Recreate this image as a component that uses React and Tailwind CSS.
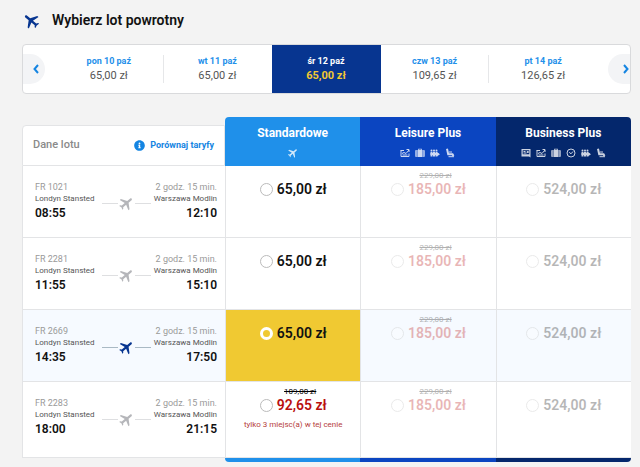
import { useState } from 'react';
import { FaInfoCircle } from 'react-icons/fa';
import { MdFlight } from 'react-icons/md';

const days = [
  { id: 'd10', label: 'pon 10 paź', price: '65,00 zł' },
  { id: 'd11', label: 'wt 11 paź', price: '65,00 zł' },
  { id: 'd12', label: 'śr 12 paź', price: '65,00 zł' },
  { id: 'd13', label: 'czw 13 paź', price: '109,65 zł' },
  { id: 'd14', label: 'pt 14 paź', price: '126,65 zł' },
];

const leisure = { id: 'leisure', price: '185,00 zł', oldPrice: '229,00 zł', disabled: true };
const business = { id: 'business', price: '524,00 zł', disabled: true };

const flights = [
  { number: 'FR 1021', departs: '08:55', arrives: '12:10', fares: [{ id: 'standard', price: '65,00 zł' }, leisure, business] },
  { number: 'FR 2281', departs: '11:55', arrives: '15:10', fares: [{ id: 'standard', price: '65,00 zł' }, leisure, business] },
  { number: 'FR 2669', departs: '14:35', arrives: '17:50', fares: [{ id: 'standard', price: '65,00 zł' }, leisure, business] },
  {
    number: 'FR 2283',
    departs: '18:00',
    arrives: '21:15',
    fares: [
      { id: 'standard', price: '92,65 zł', oldPrice: '109,00 zł', note: 'tylko 3 miejsc(a) w tej cenie' },
      leisure,
      business,
    ],
  },
];

const Chevron = ({ className }) => (
  <svg viewBox="0 0 6 10" className={`h-[10px] w-[6px] ${className}`} fill="none" stroke="currentColor" strokeWidth="2" aria-hidden="true">
    <path d="M5 1L1.5 5 5 9" />
  </svg>
);

const SeatMapIcon = () => (
  <svg viewBox="0 0 10 10" className="size-[10px]" fill="none" stroke="currentColor" aria-hidden="true">
    <path d="M.5 2.500h3.500M6.500 1.500h2.500v2.500M1 2.500v6h8V5.500M2 5.500l2-1 2 1L9 2M2.500 7h5" />
  </svg>
);

const BagIcon = () => (
  <svg viewBox="0 0 10 10" className="size-[10px]" fill="currentColor" aria-hidden="true">
    <path d="M3.200 2V.8h3.600V2H6V1.500H4V2zM.3 2.800q0-.8.8-.8h.6v7H1.100q-.8 0-.8-.8zM2.400 2h5.200v7H2.400zM8.300 2h.6q.8 0 .8.800v5.400q0 .8-.8.800h-.6z" />
  </svg>
);

const QueueIcon = () => (
  <svg viewBox="0 0 10 10" className="size-[10px]" fill="currentColor" aria-hidden="true">
    <circle cx="1.500" cy="2.500" r="1" />
    <circle cx="4" cy="2.500" r="1" />
    <circle cx="6.500" cy="2.500" r="1" />
    <path d="M.5 3.800h2v4.700h-2zM3 3.800h2v4.700H3zM5.500 3.800h2V4.500L10 6.300 7.500 8v.5h-2z" />
    <path d="M.5 5h8v2h-8z" />
  </svg>
);

const SeatIcon = () => (
  <svg viewBox="0 0 10 10" className="size-[10px]" fill="none" stroke="currentColor" aria-hidden="true">
    <path strokeWidth="2" d="M2 .8l1.200 5.400h4.300L8.500 8" />
    <path d="M4 4h3M3.500 8.700h5.500" />
  </svg>
);

const CertificateIcon = () => (
  <svg viewBox="0 0 10 10" className="size-[10px]" aria-hidden="true">
    <path fill="currentColor" fillRule="evenodd" d="M.5 1h9v8.500L8 8.500H.5zM1.700 2.200v4h6.600v-4z" />
    <path fill="none" stroke="currentColor" d="M2.500 3.500h2M2.500 5h3M6 3l1.500 2M7.500 3L6 5" />
  </svg>
);

const ClockIcon = () => (
  <svg viewBox="0 0 10 10" className="size-[10px]" fill="none" stroke="currentColor" aria-hidden="true">
    <circle cx="5" cy="5" r="4" />
    <path d="M3.200 4.300L5 5.800 7 3.500" />
  </svg>
);

const SmallPlane = () => <MdFlight className="size-[12px] rotate-50" />;

const tariffs = [
  { id: 'standard', name: 'Standardowe', head: 'bg-[#1f90ea] rounded-tl', foot: 'bg-[#1f90ea] rounded-bl', icons: [SmallPlane] },
  { id: 'leisure', name: 'Leisure Plus', head: 'bg-[#0b45c1]', foot: 'bg-[#0b45c1]', icons: [SeatMapIcon, BagIcon, QueueIcon, SeatIcon] },
  {
    id: 'business',
    name: 'Business Plus',
    head: 'bg-[#04276c] rounded-tr',
    foot: 'bg-[#04276c] rounded-br',
    icons: [CertificateIcon, SeatMapIcon, BagIcon, ClockIcon, QueueIcon, SeatIcon],
  },
];

const DayStrip = ({ selectedDay, onSelect }) => (
  <div className="flex h-[50px] items-stretch overflow-hidden rounded-sm border border-[#d9dadc] bg-white">
    <div className="flex w-[32px] shrink-0 items-center">
      <button aria-label="Poprzednie dni" className="flex h-[30px] w-[22px] items-center justify-center rounded-r-full bg-[#f3f4f6] pl-1 text-[#1585e2]">
        <Chevron />
      </button>
    </div>
    <div className="flex grow items-stretch">
      {days.map((day, index) => {
        const active = day.id === selectedDay;
        return (
          <button
            key={day.id}
            onClick={() => onSelect(day.id)}
            className={`flex flex-1 items-center ${active ? 'bg-[#073590]' : ''}`}
          >
            <span className={`flex h-[28px] grow flex-col items-center justify-center border-r ${active || index === 1 || index === 4 ? 'border-transparent' : 'border-[#e6e7e9]'}`}>
              <span className={`text-[9px] leading-[14px] font-bold ${active ? 'text-white' : 'text-[#1f90ea]'}`}>{day.label}</span>
              <span className={`text-[11px] leading-4 ${active ? 'font-bold text-[#f1c933]' : 'text-[#555]'}`}>{day.price}</span>
            </span>
          </button>
        );
      })}
    </div>
    <div className="flex w-[32px] shrink-0 items-center justify-end">
      <button aria-label="Następne dni" className="flex h-[30px] w-[22px] items-center justify-end rounded-l-full bg-[#f3f4f6] pr-px text-[#1585e2]">
        <Chevron className="-scale-x-100" />
      </button>
    </div>
  </div>
);

const FlightDetails = ({ flight, active }) => {
  const line = active ? 'bg-[#a9b9c4]' : 'bg-[#dedfe1]';
  return (
    <div className="flex justify-between pt-[15px] pr-2 pl-3">
      <div>
        <div className="text-[9px] leading-[12px] text-[#9a9a9a]">{flight.number}</div>
        <div className="text-[8px] leading-[12px] text-[#555]">Londyn Stansted</div>
        <div className="text-[12px] leading-4 font-semibold text-[#111]">{flight.departs}</div>
      </div>
      <div className="flex grow items-center justify-center pt-1 pl-1">
        <span className={`h-px w-4 ${line}`}></span>
        <MdFlight className={`size-[17px] shrink-0 rotate-50 ${active ? 'text-[#073590]' : 'text-[#b5b6ba]'}`} />
        <span className={`h-px w-4 ${line}`}></span>
      </div>
      <div className="text-right">
        <div className="text-[9px] leading-[12px] text-[#9a9a9a]">2 godz. 15 min.</div>
        <div className="text-[8px] leading-[12px] text-[#555]">Warszawa Modlin</div>
        <div className="text-[12px] leading-4 font-semibold text-[#111]">{flight.arrives}</div>
      </div>
    </div>
  );
};

const FareOption = ({ flight, fare, checked, onSelect }) => {
  const priceColor = fare.oldPrice ? 'text-[#b90f0f]' : 'text-[#111]';
  return (
    <label className={`flex flex-col items-center pt-[5px] ${fare.disabled ? 'opacity-30' : ''}`}>
      <span className="h-[9px] pl-[14px] text-[8px] leading-[9px] text-black line-through">{fare.oldPrice}</span>
      <span className="flex items-center gap-1">
        <input
          type="radio"
          name="fare"
          disabled={fare.disabled}
          checked={checked}
          onChange={() => onSelect(`${flight.number}-${fare.id}`)}
          className={`size-[13px] appearance-none rounded-full ${checked ? 'border-[3px] border-white' : 'border border-[#bbb] bg-white'}`}
        />
        <span className={`text-[14px] leading-[18px] font-semibold ${priceColor}`}>{fare.price}</span>
      </span>
      {fare.note && <span className="pt-[5px] text-[8px] leading-[12px] text-[#b5403c]">{fare.note}</span>}
    </label>
  );
};

const App = () => {
  const [selectedDay, setSelectedDay] = useState('d12');
  const [selectedFare, setSelectedFare] = useState('FR 2669-standard');

  return (
    <div className="min-h-screen bg-[#f3f3f3] pt-3 pr-[9px] pl-[22px] font-['Roboto',sans-serif]">
      <h1 className="flex h-4 items-center gap-[11px] text-[14px] leading-4 font-semibold text-[#111]">
        <MdFlight className="size-[19px] -rotate-50 text-[#073590]" />
        Wybierz lot powrotny
      </h1>

      <div className="mt-4">
        <DayStrip selectedDay={selectedDay} onSelect={setSelectedDay} />
      </div>

      <table className="mt-[23px] w-full table-fixed border-separate border-spacing-0">
        <thead>
          <tr>
            <th className="w-1/3 p-0 align-bottom font-normal">
              <div className="flex h-[41px] items-center justify-between rounded-tl-sm border border-[#e3e4e6] bg-white pr-[10px] pl-[10px]">
                <span className="text-[11px] font-medium text-[#8a8a8a]">Dane lotu</span>
                <a href="#taryfy" className="flex items-center gap-[5px] text-[9px] font-bold text-[#1585e2]">
                  <FaInfoCircle size={11} />
                  Porównaj taryfy
                </a>
              </div>
            </th>
            {tariffs.map(tariff => (
              <th key={tariff.id} scope="col" className={`h-[49px] p-0 align-top text-white ${tariff.head}`}>
                <div className="pt-2 text-[12px] leading-4 font-bold">{tariff.name}</div>
                <div className="mt-[7px] flex h-[10px] items-center justify-center gap-[5px] opacity-80">
                  {tariff.icons.map((Icon, index) => (
                    <Icon key={index} />
                  ))}
                </div>
              </th>
            ))}
          </tr>
        </thead>
        <tbody>
          {flights.map(flight => {
            const active = selectedFare.startsWith(flight.number);
            return (
              <tr key={flight.number} className={`h-[72px] last:h-[76px] ${active ? 'bg-[#f6faff]' : 'bg-white'}`}>
                <td className="border-b border-l border-[#e3e4e6] p-0 align-top">
                  <FlightDetails flight={flight} active={active} />
                </td>
                {flight.fares.map(fare => {
                  const checked = selectedFare === `${flight.number}-${fare.id}`;
                  return (
                    <td key={fare.id} className={`border-b border-l border-[#e3e4e6] p-0 align-top ${checked ? 'bg-[#f0c932]' : ''}`}>
                      <FareOption flight={flight} fare={fare} checked={checked} onSelect={setSelectedFare} />
                    </td>
                  );
                })}
              </tr>
            );
          })}
        </tbody>
        <tfoot>
          <tr>
            <td className="p-0"></td>
            {tariffs.map(tariff => (
              <td key={tariff.id} className={`h-1 p-0 ${tariff.foot}`}></td>
            ))}
          </tr>
        </tfoot>
      </table>
    </div>
  );
};

export default App;
